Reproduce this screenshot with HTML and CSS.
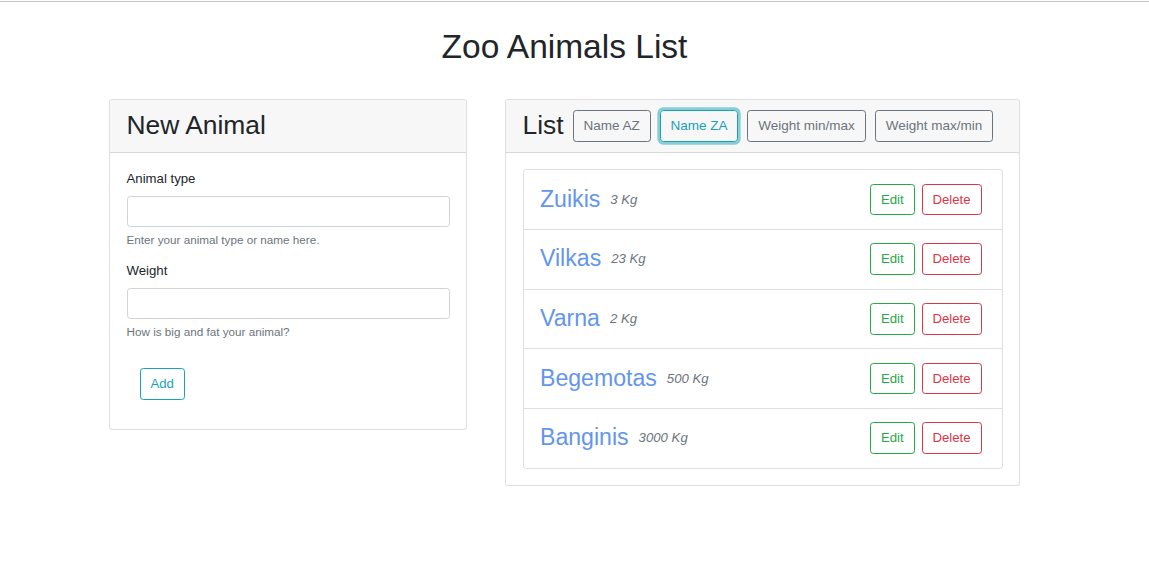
FILE: index.html
```html
<!DOCTYPE html>
<html lang="en">
<head>
<meta charset="utf-8">
<title>Zoo Animals List</title>
<link rel="stylesheet" href="styles.css">
</head>
<body>
<div class="topline"></div>
<div class="container">
  <h1 class="page-title">Zoo Animals List</h1>
  <div class="columns">
    <div class="card card-new">
      <div class="card-header">
        <h2 class="card-title">New Animal</h2>
      </div>
      <div class="card-body">
        <div class="form-group">
          <label class="label">Animal type</label>
          <input class="form-control" type="text">
          <small class="form-text">Enter your animal type or name here.</small>
        </div>
        <div class="form-group">
          <label class="label">Weight</label>
          <input class="form-control" type="text">
          <small class="form-text">How is big and fat your animal?</small>
        </div>
        <button class="btn btn-info btn-add">Add</button>
      </div>
    </div>
    <div class="card card-list">
      <div class="card-header header-row">
        <h2 class="card-title">List</h2>
        <button class="btn btn-secondary sort-btn">Name AZ</button>
        <button class="btn btn-info sort-btn focused">Name ZA</button>
        <button class="btn btn-secondary sort-btn">Weight min/max</button>
        <button class="btn btn-secondary sort-btn">Weight max/min</button>
      </div>
      <div class="card-body">
        <ul class="list-group">
          <li class="list-item">
            <div class="animal"><span class="name">Zuikis</span><span class="weight">3 Kg</span></div>
            <div class="actions"><button class="btn btn-success">Edit</button><button class="btn btn-danger">Delete</button></div>
          </li>
          <li class="list-item">
            <div class="animal"><span class="name">Vilkas</span><span class="weight">23 Kg</span></div>
            <div class="actions"><button class="btn btn-success">Edit</button><button class="btn btn-danger">Delete</button></div>
          </li>
          <li class="list-item">
            <div class="animal"><span class="name">Varna</span><span class="weight">2 Kg</span></div>
            <div class="actions"><button class="btn btn-success">Edit</button><button class="btn btn-danger">Delete</button></div>
          </li>
          <li class="list-item">
            <div class="animal"><span class="name">Begemotas</span><span class="weight">500 Kg</span></div>
            <div class="actions"><button class="btn btn-success">Edit</button><button class="btn btn-danger">Delete</button></div>
          </li>
          <li class="list-item">
            <div class="animal"><span class="name">Banginis</span><span class="weight">3000 Kg</span></div>
            <div class="actions"><button class="btn btn-success">Edit</button><button class="btn btn-danger">Delete</button></div>
          </li>
        </ul>
      </div>
    </div>
  </div>
</div>
</body>
</html>
```

FILE: styles.css
```css
* { box-sizing: border-box; }
html { font-size: 13.2px; }
body {
  margin: 0;
  font-family: "Liberation Sans", Arial, sans-serif;
  font-size: 13.2px;
  line-height: 1.5;
  color: #212529;
  background: #fff;
}
.topline {
  margin-top: 1px;
  height: 1px;
  background: #c4c4c4;
}
.container {
  width: 911px;
  margin-left: 109px;
}
.page-title {
  margin: 25px 0 0;
  font-size: 33.5px;
  font-weight: 400;
  line-height: 1.2;
  text-align: center;
}
.columns {
  display: flex;
  align-items: flex-start;
  gap: 38px;
  margin-top: 32px;
}
.card {
  border: 1px solid rgba(0,0,0,.125);
  border-radius: 3.3px;
  background: #fff;
}
.card-new { width: 358px; flex: none; }
.card-list { flex: 1; }
.card-header {
  background: #f7f7f7;
  border-bottom: 1px solid rgba(0,0,0,.125);
  padding: 9.9px 16.5px;
  border-radius: 3.3px 3.3px 0 0;
}
.card-title {
  margin: 0;
  font-size: 26.4px;
  font-weight: 400;
  line-height: 1.2;
}
.header-row {
  display: flex;
  align-items: center;
  gap: 9px;
}
.card-body { padding: 16.5px; }
.form-group { margin-bottom: 13.2px; }
.label {
  display: block;
  margin-bottom: 6.6px;
}
.form-control {
  display: block;
  width: 100%;
  height: 31.7px;
  padding: 4.95px 9.9px;
  font: inherit;
  border: 1px solid #ced4da;
  border-radius: 3.3px;
  background: #fff;
}
.form-text {
  display: block;
  margin-top: 3.3px;
  font-size: 11.7px;
  line-height: 1.5;
  color: #6c757d;
}
.btn {
  display: inline-block;
  font-family: inherit;
  font-size: 13.2px;
  line-height: 1.5;
  padding: 4.95px 9.9px;
  border: 1px solid;
  border-radius: 3.3px;
  background: transparent;
  cursor: pointer;
}
.sort-btn {
  font-size: 13.5px;
  height: 31.7px;
  line-height: 1;
}
.btn-secondary { color: #6c757d; border-color: #6c757d; }
.btn-info { color: #17a2b8; border-color: #17a2b8; }
.btn-success { color: #28a745; border-color: #28a745; }
.btn-danger { color: #dc3545; border-color: #dc3545; }
.focused { box-shadow: 0 0 0 2.64px rgba(23,162,184,.5); }
.btn-add { margin: 14.5px 0 13px 13px; }
.list-group {
  list-style: none;
  margin: 0;
  padding: 0;
  border: 1px solid rgba(0,0,0,.125);
  border-radius: 3.3px;
}
.list-item {
  display: flex;
  align-items: center;
  justify-content: space-between;
  padding: 13.5px 20px 13.5px 16.5px;
  border-top: 1px solid rgba(0,0,0,.125);
}
.list-item:first-child { border-top: 0; }
.animal {
  display: flex;
  align-items: center;
  line-height: 1.2;
}
.name {
  font-size: 23.1px;
  color: #6495ed;
}
.weight {
  margin-left: 10px;
  font-style: italic;
  color: #6c757d;
}
.actions { display: flex; gap: 7px; }
```
